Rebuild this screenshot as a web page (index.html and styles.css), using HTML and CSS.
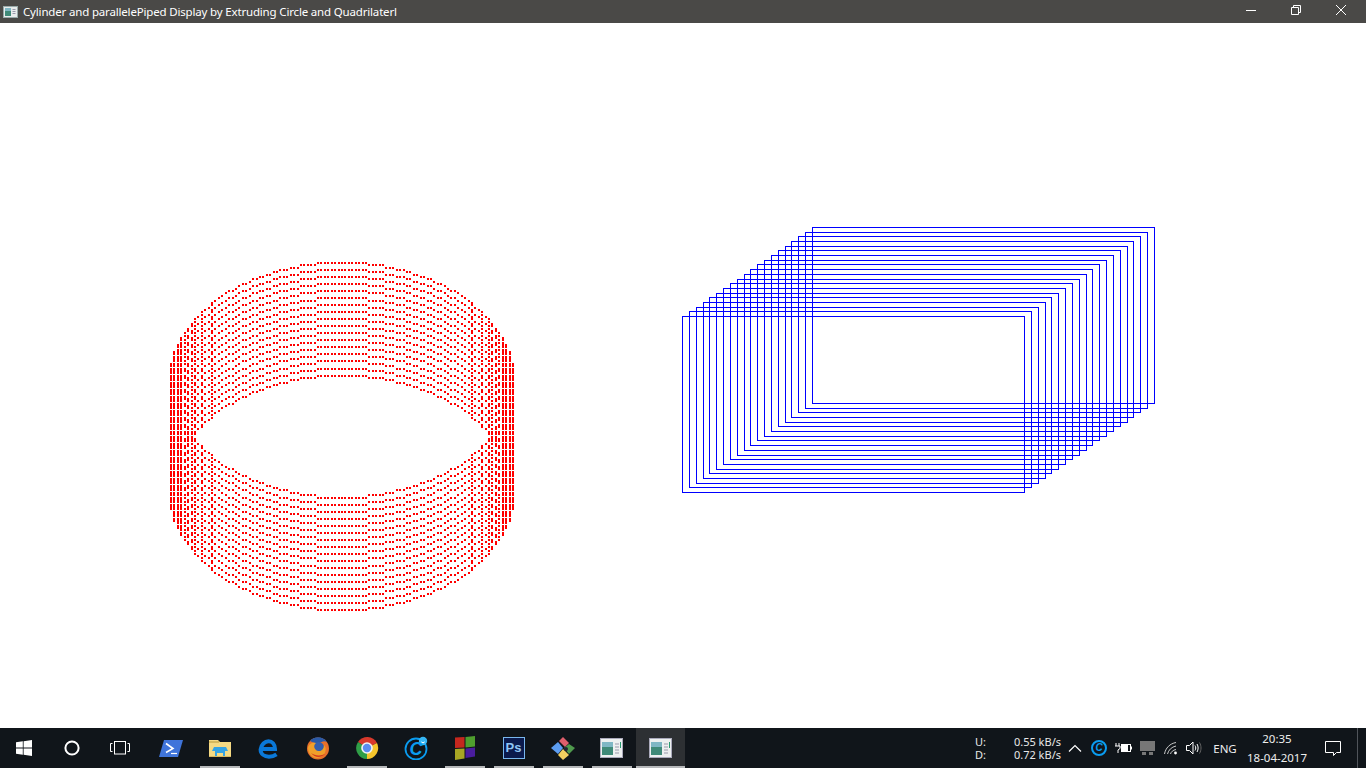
FILE: index.html
```html
<!DOCTYPE html>
<html lang="en">
<head>
<meta charset="utf-8">
<title>Cylinder and parallelePiped Display by Extruding Circle and Quadrilaterl</title>
<link rel="stylesheet" href="styles.css">
</head>
<body>
<div class="desktop">
  <header class="titlebar">
    <svg class="app-mini" width="15" height="12" viewBox="0 0 15 12"><rect x="0.5" y="0.5" width="14" height="11" fill="#e8ecec" stroke="#9aa"/><rect x="2" y="2" width="6" height="8" fill="#3f8a78"/><rect x="2" y="2" width="6" height="3" fill="#7fb7c4"/><rect x="9.5" y="3" width="3" height="1" fill="#99a"/><rect x="9.5" y="5" width="3" height="1" fill="#99a"/><rect x="9.5" y="7" width="3" height="1" fill="#99a"/></svg>
    <span class="title">Cylinder and parallelePiped Display by Extruding Circle and Quadrilaterl</span>
    <div class="win-controls">
      <span class="ctl"><svg width="12" height="12" viewBox="0 0 12 12"><path d="M1 6.5H11" stroke="#fff" fill="none"/></svg></span>
      <span class="ctl"><svg width="12" height="12" viewBox="0 0 12 12"><path d="M1.5 3.5H8.5V10.5H1.5ZM3.5 3.5V1.5H10.5V8.5H8.5" stroke="#fff" fill="none"/></svg></span>
      <span class="ctl"><svg width="12" height="12" viewBox="0 0 12 12"><path d="M1 1L11 11M11 1L1 11" stroke="#fff" fill="none"/></svg></span>
    </div>
  </header>

  <canvas id="scene" class="scene" width="1366" height="705"></canvas>

  <footer class="taskbar">
    <div class="sys-btn"><svg width="16" height="16" viewBox="0 0 16 16" fill="#fff"><path d="M0 2.3L6.8 1.3V7.6H0ZM7.6 1.2L16 0V7.6H7.6ZM0 8.4H6.8V14.7L0 13.7ZM7.6 8.4H16V16L7.6 14.8Z"/></svg></div>
    <div class="sys-btn"><svg width="16" height="16" viewBox="0 0 16 16"><circle cx="8" cy="8" r="6.6" fill="none" stroke="#fff" stroke-width="2"/></svg></div>
    <div class="sys-btn"><svg width="20" height="14" viewBox="0 0 20 14" fill="none" stroke="#fff"><rect x="4.5" y="0.5" width="11" height="12.5"/><path d="M2.5 2.5H0.5V10.5H2.5M17.5 2.5H19.5V10.5H17.5"/></svg></div>

    <div class="apps">
      <div class="app"><svg width="24" height="17" viewBox="0 0 24 17"><path d="M5 0H24L19 17H0Z" fill="#3f74da"/><path d="M7 3.5L14 8.5L7 12.5" fill="none" stroke="#fff" stroke-width="1.6"/><path d="M12 13.5H18" stroke="#fff" stroke-width="1.2"/></svg></div>
      <div class="app running"><svg width="22" height="18" viewBox="0 0 22 18"><path d="M0 1H9L11 3H22V18H0Z" fill="#f5d983"/><path d="M0 3H10" stroke="#c9a94f" stroke-width="1.4"/><path d="M0 17.5H22" stroke="#d8b860"/><path d="M5 8H17L19 12H16V17H14V14H8V17H6V12H3Z" fill="#35a3e4"/></svg></div>
      <div class="app"><svg width="21" height="21" viewBox="0 0 21 21"><path d="M4 11H17C17 6 14 3.2 10.5 3.2C7 3.2 3.2 6.5 2.6 11.5C2.6 16 6.5 18.7 11 18.7C14 18.7 16.5 17.8 18.5 16.4" fill="none" stroke="#0a78d8" stroke-width="4"/></svg></div>
      <div class="app"><svg width="24" height="24" viewBox="0 0 24 24"><circle cx="12" cy="12.5" r="11" fill="#e8702a"/><path d="M4 5C8 0 17 0 21 6C18 4 15 6 12 8C9 8 7 6 4 5Z" fill="#2a5aa8"/><circle cx="12.5" cy="11.5" r="5.5" fill="#345fae"/><path d="M2 11C5 6 8 6 10 7C7 9 8 14 12 15C15.5 15.5 18 13 18 9C21 12 20 18 15 21C9 24 2 20 2 11Z" fill="#f0a02a"/><path d="M5 17C9 22 15 22 19 18C15 20 9 20 5 17Z" fill="#d63a20"/></svg></div>
      <div class="app running"><svg width="24" height="24" viewBox="0 0 24 24"><path d="M12 12L3 6A11 11 0 0 1 22 7Z" fill="#d8392c"/><path d="M12 12L22 7A11 11 0 0 1 12 23Z" fill="#f6c52c"/><path d="M12 12L12 23A11 11 0 0 1 3 6Z" fill="#2f9e47"/><circle cx="12" cy="12" r="5.8" fill="#f1f3f4"/><circle cx="12" cy="12" r="4.2" fill="#5a8df0"/></svg></div>
      <div class="app"><span class="cc"><svg width="24" height="24" viewBox="0 0 24 24"><circle cx="12" cy="13" r="10.5" fill="none" stroke="#0a9cf0" stroke-width="1.8"/><circle cx="19" cy="5" r="4.2" fill="#35b6f5"/><path d="M17.3 5.8C18 7 20 7 20.7 5.8" stroke="#fff" fill="none"/></svg><b class="cc-letter">C</b></span></div>
      <div class="app running"><svg width="22" height="24" viewBox="0 0 22 24"><path d="M1 1.5L10.5 1V11.5L1 12Z" fill="#c5281e"/><path d="M11.5 1L21 0V10.5L11.5 11.5Z" fill="#4f9e2e"/><path d="M1 13L10.5 12.5V22.5L1 24Z" fill="#a8a624"/><path d="M11.5 12.5L21 11.5V20.5L11.5 22Z" fill="#4a1d9e"/></svg></div>
      <div class="app running"><span class="ps">Ps</span></div>
      <div class="app running"><svg width="24" height="24" viewBox="0 0 24 24"><path d="M0 12L7 6L12 12L7 18Z" fill="#5d9df2"/><path d="M8 5L12 1L18 7L14 11Z" fill="#df5f6c"/><path d="M13 12L18 8L24 12L18 18Z" fill="#4f9a4d"/><path d="M7 19L12 13L18 19L12 24Z" fill="#f3d060"/><circle cx="15" cy="13" r="2" fill="#223"/></svg></div>
      <div class="app running"><svg width="23" height="20" viewBox="0 0 23 20"><rect x="0.5" y="0.5" width="22" height="19" fill="#edf0f0" stroke="#aab"/><rect x="2" y="4" width="11" height="13" fill="#3f8a78"/><rect x="2" y="4" width="11" height="5" fill="#7fb7c4"/><path d="M15 6H19M15 9H19M15 12H19M15 15H19" stroke="#99a"/><path d="M20.5 4V10" stroke="#2a9a70"/></svg></div>
      <div class="app running active"><svg width="23" height="20" viewBox="0 0 23 20"><rect x="0.5" y="0.5" width="22" height="19" fill="#edf0f0" stroke="#aab"/><rect x="2" y="4" width="11" height="13" fill="#3f8a78"/><rect x="2" y="4" width="11" height="5" fill="#7fb7c4"/><path d="M15 6H19M15 9H19M15 12H19M15 15H19" stroke="#99a"/><path d="M20.5 4V10" stroke="#2a9a70"/></svg></div>
    </div>

    <div class="tray">
      <div class="netmeter">
        <div class="net-row"><span>U:</span><span>0.55 kB/s</span></div>
        <div class="net-row"><span>D:</span><span>0.72 kB/s</span></div>
      </div>
      <div class="tray-icon"><svg width="14" height="8" viewBox="0 0 14 8"><path d="M1 7.5L7 1.5L13 7.5" fill="none" stroke="#fff" stroke-width="1.2"/></svg></div>
      <div class="tray-icon"><span class="copy">C</span></div>
      <div class="tray-icon"><svg width="17" height="12" viewBox="0 0 17 12"><path d="M1 1V4M4 1V4M0 4H5V6.5L3 8V11" stroke="#fff" fill="none"/><rect x="6.5" y="2.5" width="9" height="7" fill="none" stroke="#fff"/><rect x="7" y="3" width="6" height="6" fill="#fff"/><path d="M16.5 4.5V7.5" stroke="#fff"/></svg></div>
      <div class="tray-icon"><svg width="15" height="15" viewBox="0 0 15 15"><rect x="0" y="0" width="15" height="10" fill="#777"/><rect x="2" y="11" width="4" height="3" fill="#777"/><rect x="9" y="11" width="4" height="3" fill="#777"/></svg></div>
      <div class="tray-icon"><svg width="15" height="13" viewBox="0 0 15 13" fill="none" stroke="#c8c8c8"><path d="M0.5 12C1.5 6 6 1.5 12 0.5"/><path d="M3.5 12C4.5 8 7.5 5 12 4"/><path d="M6.5 12C7 10 9 8 12 7.5"/><circle cx="11.5" cy="11" r="1.4" fill="#fff" stroke="none"/></svg></div>
      <div class="tray-icon narrow"><svg width="16" height="14" viewBox="0 0 16 14" fill="none" stroke="#fff"><path d="M0.5 4.5H3.5L7 1V13L3.5 9.5H0.5Z"/><path d="M9 4.5C10 6 10 8 9 9.5"/><path d="M11 3C12.5 5.5 12.5 8.5 11 11"/><path d="M13.5 1.5C15.5 5 15.5 9 13.5 12.5" stroke="#666"/></svg></div>
      <div class="lang">ENG</div>
      <div class="clock"><span>20:35</span><span>18-04-2017</span></div>
      <div class="notif"><svg width="16" height="15" viewBox="0 0 16 15"><path d="M0.5 0.5H15.5V11.5H11.5L8.5 14.5V11.5H0.5Z" fill="none" stroke="#fff"/></svg></div>
      <div class="show-desktop"></div>
    </div>
  </footer>
</div>
<script src="app.js"></script>
</body>
</html>
```
FILE: styles.css
```css
* { box-sizing: border-box; }
html, body { margin: 0; padding: 0; background: #fff; }
.desktop { width: 1366px; height: 768px; display: flex; flex-direction: column; overflow: hidden; font-family: "Noto Sans", "Open Sans", sans-serif; }

.titlebar { height: 23px; flex: none; background: #4a4947; color: #fff; display: flex; align-items: center; padding-left: 3px; }
.app-mini { flex: none; }
.title { margin-left: 5px; font-size: 11.5px; letter-spacing: -0.17px; white-space: nowrap; }
.win-controls { margin-left: auto; display: flex; height: 23px; padding-right: 3px; }
.ctl { width: 45px; display: flex; align-items: center; justify-content: center; }
.ctl svg { margin-top: -3px; }

.scene { display: block; flex: none; width: 1366px; height: 705px; }

.taskbar { height: 40px; flex: none; background: #10151a; color: #fff; display: flex; align-items: stretch; }
.sys-btn { width: 48px; display: flex; align-items: center; justify-content: center; flex: none; }
.apps { display: flex; margin-left: 2px; }
.app { width: 49px; position: relative; display: flex; align-items: center; justify-content: center; flex: none; }
.app.running::after { content: ""; position: absolute; left: 5px; right: 4px; bottom: 0; height: 2px; background: #b6b8ba; }
.app.active { background: #2d3033; }
.app.active::after { left: 0; right: 0; }
.cc { position: relative; width: 24px; height: 24px; display: block; }
.cc svg { display: block; }
.cc-letter { position: absolute; left: 6px; top: 1px; font: italic 700 18px/24px "Liberation Sans", sans-serif; color: #0a9cf0; }
.ps { width: 22px; height: 22px; background: #0b1a4d; border: 1px solid #79b7ee; color: #8fc6f6; font: 700 13px/20px "Liberation Sans", sans-serif; text-align: center; display: block; }

.tray { margin-left: auto; display: flex; align-items: stretch; }
.netmeter { width: 88px; display: flex; flex-direction: column; justify-content: center; font-size: 11px; line-height: 13px; color: #e8e8e8; }
.net-row { display: flex; justify-content: space-between; padding-right: 2px; white-space: nowrap; }
.tray-icon { width: 24px; display: flex; align-items: center; justify-content: center; }
.tray-icon.narrow { width: 22px; }
.copy { width: 16px; height: 16px; border: 2px solid #0a9cf0; border-radius: 50%; color: #0a9cf0; font: italic 700 10px/12px "Liberation Sans", sans-serif; text-align: center; display: block; }
.lang { width: 40px; font-size: 11.5px; display: flex; align-items: center; justify-content: center; color: #eee; }
.clock { width: 64px; display: flex; flex-direction: column; justify-content: center; align-items: center; font-size: 11.5px; line-height: 19px; color: #eee; white-space: nowrap; }
.notif { width: 48px; display: flex; align-items: center; justify-content: center; }
.show-desktop { width: 9px; border-left: 1px solid #50545a; }
```
FILE: app.js
```js
(function () {
  var ctx = document.getElementById('scene').getContext('2d');
  var OFFSET = 23;
  var UX = 3.42, UY = 2.345;

  // A point on the circle's own unit lattice, scaled to the screen.
  function dot(u, v) {
    ctx.fillRect(Math.round(170 + (u + 50) * UX), Math.round(262 + (v + 50) * UY) - OFFSET, 2, 2);
  }

  // Midpoint circle, radius 50 lattice units.
  function ring(v0) {
    var x = 0, y = 50, d = 1 - 50;
    while (x <= y) {
      dot(x, v0 + y); dot(-x, v0 + y); dot(x, v0 - y); dot(-x, v0 - y);
      dot(y, v0 + x); dot(-y, v0 + x); dot(y, v0 - x); dot(-y, v0 - x);
      if (d < 0) { d += 2 * x + 3; } else { d += 2 * (x - y) + 5; y--; }
      x++;
    }
  }

  ctx.fillStyle = '#ff0000';
  for (var i = 0; i < 17; i++) ring(3 * i);

  ctx.fillStyle = '#0000ff';
  function rect(x, y, w, h) {
    ctx.fillRect(x, y - OFFSET, w + 1, 1);
    ctx.fillRect(x, y + h - OFFSET, w + 1, 1);
    ctx.fillRect(x, y - OFFSET, 1, h + 1);
    ctx.fillRect(x + w, y - OFFSET, 1, h + 1);
  }
  for (var j = 0; j < 20; j++) {
    rect(682 + Math.round(j * 130 / 19), 316 - Math.round(j * 89 / 19), 342, 176);
  }
})();
```
